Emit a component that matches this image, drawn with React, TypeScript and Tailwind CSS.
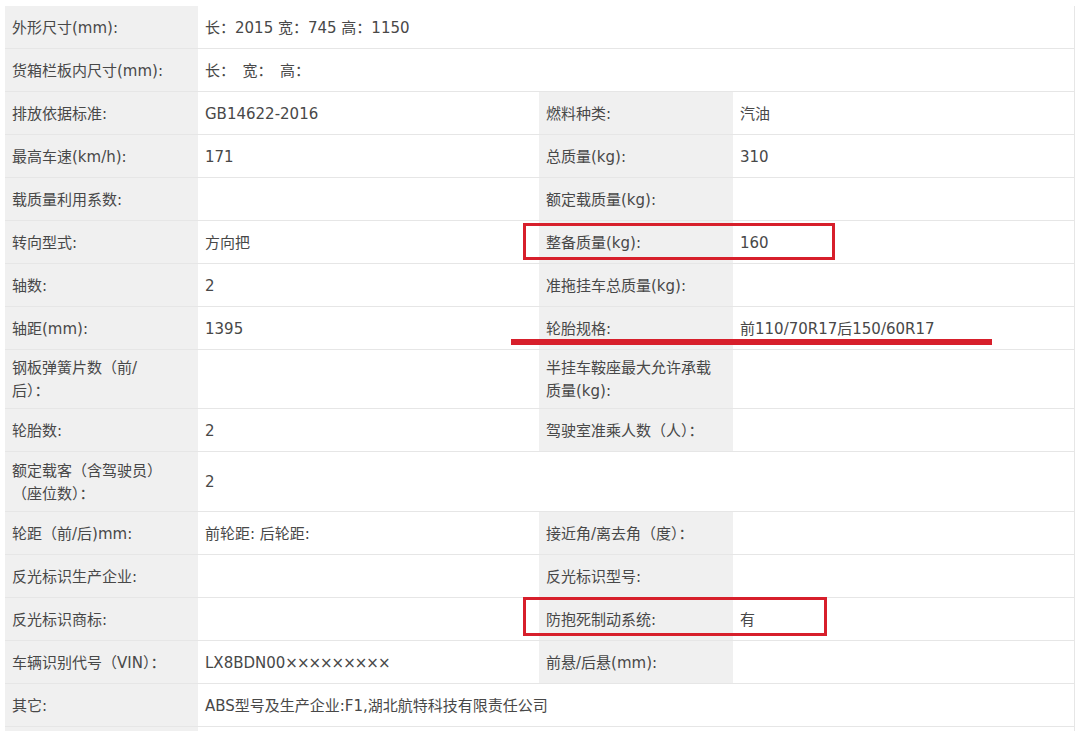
import React from "react";

type Cell = { label: React.ReactNode; value?: React.ReactNode };
type Row = { h: string; left: Cell; right?: Cell };

const rows: Row[] = [
  { h: "h-[43px]", left: { label: "外形尺寸(mm):", value: "长：2015 宽：745 高：1150" } },
  { h: "h-[43px]", left: { label: "货箱栏板内尺寸(mm):", value: "长：\u2002宽：\u2002高：" } },
  { h: "h-[43px]", left: { label: "排放依据标准:", value: "GB14622-2016" }, right: { label: "燃料种类:", value: "汽油" } },
  { h: "h-[43px]", left: { label: "最高车速(km/h):", value: "171" }, right: { label: "总质量(kg):", value: "310" } },
  { h: "h-[43px]", left: { label: "载质量利用系数:", value: "" }, right: { label: "额定载质量(kg):", value: "" } },
  { h: "h-[43px]", left: { label: "转向型式:", value: "方向把" }, right: { label: "整备质量(kg):", value: "160" } },
  { h: "h-[43px]", left: { label: "轴数:", value: "2" }, right: { label: "准拖挂车总质量(kg):", value: "" } },
  { h: "h-[43px]", left: { label: "轴距(mm):", value: "1395" }, right: { label: "轮胎规格:", value: "前110/70R17后150/60R17" } },
  {
    h: "h-[59px]",
    left: { label: (<>钢板弹簧片数（前/<br />后）：</>), value: "" },
    right: { label: (<>半挂车鞍座最大允许承载<br />质量(kg):</>), value: "" },
  },
  { h: "h-[43px]", left: { label: "轮胎数:", value: "2" }, right: { label: "驾驶室准乘人数（人）：", value: "" } },
  { h: "h-[60px]", left: { label: (<>额定载客（含驾驶员）<br />（座位数）：</>), value: "2" } },
  { h: "h-[43px]", left: { label: "轮距（前/后)mm:", value: "前轮距: 后轮距:" }, right: { label: "接近角/离去角（度）：", value: "" } },
  { h: "h-[43px]", left: { label: "反光标识生产企业:", value: "" }, right: { label: "反光标识型号:", value: "" } },
  { h: "h-[43px]", left: { label: "反光标识商标:", value: "" }, right: { label: "防抱死制动系统:", value: "有" } },
  {
    h: "h-[43px]",
    left: {
      label: "车辆识别代号（VIN）：",
      value: (<>LX8BDN00<span className="tracking-[-1px]">×××××××××</span></>),
    },
    right: { label: "前悬/后悬(mm):", value: "" },
  },
  { h: "h-[43px]", left: { label: "其它:", value: "ABS型号及生产企业:F1,湖北航特科技有限责任公司" } },
];

function LabelCell({ children, w }: { children: React.ReactNode; w: string }) {
  return (
    <div className={`${w} shrink-0 bg-[#f0f0f0] px-[7px] pt-[2px] flex items-center whitespace-nowrap leading-[23px]`}>
      <div>{children}</div>
    </div>
  );
}

function ValueCell({ children, w }: { children: React.ReactNode; w: string }) {
  return (
    <div className={`${w} bg-white px-[7px] pt-[2px] flex items-center whitespace-pre leading-[23px]`}>
      <div>{children}</div>
    </div>
  );
}

export default function App() {
  return (
    <div
      className="relative w-[1080px] h-[731px] overflow-hidden bg-white text-[15px] text-[#484848]"
      style={{ fontFamily: '"DejaVu Sans", "Noto Sans CJK SC", sans-serif' }}
    >
      <div className="ml-[5px] mt-[6px] w-[1070px] border-r border-[#e6e6e6]">
        {rows.map((r, i) => (
          <div key={i} className={`flex ${r.h} border-b border-[#e6e6e6]`}>
            <LabelCell w="w-[193px]">{r.left.label}</LabelCell>
            {r.right ? (
              <>
                <ValueCell w="w-[341px] shrink-0">{r.left.value}</ValueCell>
                <LabelCell w="w-[194px]">{r.right.label}</LabelCell>
                <ValueCell w="flex-1">{r.right.value}</ValueCell>
              </>
            ) : (
              <ValueCell w="flex-1">{r.left.value}</ValueCell>
            )}
          </div>
        ))}
        <div className="h-[20px] flex">
          <div className="w-[193px] bg-[#f0f0f0]" />
          <div className="flex-1 bg-white" />
        </div>
      </div>

      <div className="absolute left-[523px] top-[223px] w-[312px] h-[37px] border-[3px] border-[#d71f2b]" />
      <div className="absolute left-[511px] top-[339px] w-[481px] h-[6px] bg-[#d71f2b]" />
      <div className="absolute left-[523px] top-[597px] w-[304px] h-[39px] border-[3px] border-[#d71f2b]" />
    </div>
  );
}
